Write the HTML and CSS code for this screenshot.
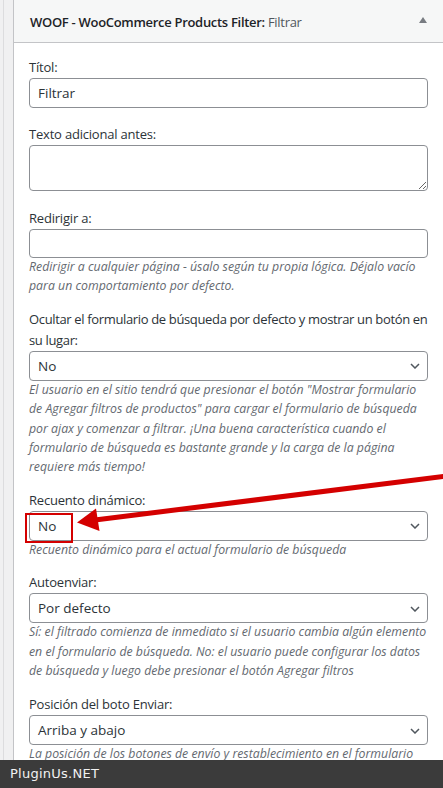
FILE: index.html
```html
<!DOCTYPE html>
<html lang="es">
<head>
<meta charset="utf-8">
<title>WOOF widget</title>
<link rel="stylesheet" href="styles.css">
</head>
<body>
<div class="frame">
  <div class="widget">
    <div class="widget-head">
      <h3 class="widget-title">WOOF - WooCommerce Products Filter: <span class="instance">Filtrar</span></h3>
      <svg class="toggle" width="8" height="6" viewBox="0 0 8 6"><polygon points="4,0 8,6 0,6" fill="#787c82"/></svg>
    </div>
    <div class="widget-body">
      <div class="field f1">
        <label class="label">Títol:</label>
        <input class="text" type="text" value="Filtrar">
      </div>
      <div class="field f2">
        <label class="label">Texto adicional antes:</label>
        <textarea class="area"></textarea>
      </div>
      <div class="field">
        <label class="label">Redirigir a:</label>
        <input class="text short" type="text" value="">
        <p class="desc">Redirigir a cualquier página - úsalo según tu propia lógica. Déjalo vacío para un comportamiento por defecto.</p>
      </div>
      <div class="field">
        <label class="label tight">Ocultar el formulario de búsqueda por defecto y mostrar un botón en su lugar:</label>
        <div class="select"><span>No</span><svg class="chev" width="10" height="6" viewBox="0 0 10 6"><path d="M1 1 L5 5 L9 1" fill="none" stroke="#50575e" stroke-width="1.5"/></svg></div>
        <p class="desc">El usuario en el sitio tendrá que presionar el botón "Mostrar formulario de Agregar filtros de productos" para cargar el formulario de búsqueda por ajax y comenzar a filtrar. ¡Una buena característica cuando el formulario de búsqueda es bastante grande y la carga de la página requiere más tiempo!</p>
      </div>
      <div class="field">
        <label class="label">Recuento dinámico:</label>
        <div class="select"><span>No</span><svg class="chev" width="10" height="6" viewBox="0 0 10 6"><path d="M1 1 L5 5 L9 1" fill="none" stroke="#50575e" stroke-width="1.5"/></svg></div>
        <p class="desc">Recuento dinámico para el actual formulario de búsqueda</p>
      </div>
      <div class="field">
        <label class="label">Autoenviar:</label>
        <div class="select"><span>Por defecto</span><svg class="chev" width="10" height="6" viewBox="0 0 10 6"><path d="M1 1 L5 5 L9 1" fill="none" stroke="#50575e" stroke-width="1.5"/></svg></div>
        <p class="desc">Sí: el filtrado comienza de inmediato si el usuario cambia algún elemento en el formulario de búsqueda. No: el usuario puede configurar los datos de búsqueda y luego debe presionar el botón Agregar filtros</p>
      </div>
      <div class="field f7">
        <label class="label">Posición del boto Enviar:</label>
        <div class="select"><span>Arriba y abajo</span><svg class="chev" width="10" height="6" viewBox="0 0 10 6"><path d="M1 1 L5 5 L9 1" fill="none" stroke="#50575e" stroke-width="1.5"/></svg></div>
        <p class="desc narrow">La posición de los botones de envío y restablecimiento en el formulario de búsqueda</p>
      </div>
    </div>
  </div>
</div>

<svg class="annot" width="443" height="788" viewBox="0 0 443 788">
  <rect x="26" y="514" width="46" height="28" fill="none" stroke="#d40000" stroke-width="2"/>
  <line x1="447" y1="476" x2="95" y2="520" stroke="#d40000" stroke-width="5"/>
  <polygon points="77,522.5 96,508.5 99.5,531" fill="#d40000"/>
</svg>

<div class="brandbar">PluginUs.NET</div>
</body>
</html>
```
FILE: styles.css
```css
html, body {
  margin: 0;
  height: 100%;
  overflow: hidden;
}

body {
  background: #f0f0f1;
  font-family: "Open Sans", "Noto Sans", sans-serif;
  font-size: 13px;
  color: #3c434a;
}

.frame {
  margin-left: 3px;
  border-left: 1px solid #dcdcde;
  padding-left: 9px;
  min-height: 100%;
}

.widget {
  background: #fff;
  border: 1px solid #c3c4c7;
  border-top: 0;
  margin-right: -1px;
  min-height: 900px;
}

.widget-head {
  height: 43px;
  box-sizing: border-box;
  border-bottom: 1px solid #c3c4c7;
  background: #f6f7f7;
  display: flex;
  align-items: center;
  padding: 0 16px 0 16px;
}

.widget-title {
  margin: 0;
  font-size: 13px;
  font-weight: 600;
  letter-spacing: -0.3px;
  color: #1d2327;
  line-height: 20px;
  padding-top: 1px;
}

.widget-title .instance {
  font-weight: 400;
  color: #50575e;
}

.toggle {
  margin-left: auto;
  margin-top: -2px;
}

.widget-body {
  padding: 0 15px;
}

.field {
  display: flex;
  flex-direction: column;
  align-items: stretch;
  margin-top: 13px;
}

.field.f1 {
  margin-top: 14px;
}

.field.f2 {
  margin-top: 16px;
}

.field.f7 {
  margin-top: 14px;
}

.label {
  line-height: 21px;
  letter-spacing: -0.2px;
  color: #2c3338;
}

.label.tight {
  letter-spacing: -0.35px;
  margin-right: -4px;
}

.text {
  box-sizing: border-box;
  height: 30px;
  margin: 0;
  border: 1px solid #8c8f94;
  border-radius: 4px;
  padding: 0 8px;
  font-family: inherit;
  font-size: 13.5px;
  color: #2c3338;
  background: #fff;
  outline: none;
}

.text.short {
  height: 29px;
}

.area {
  box-sizing: border-box;
  height: 46px;
  margin: 0 0 4px;
  border: 1px solid #8c8f94;
  border-radius: 4px;
  padding: 2px 6px;
  font-family: inherit;
  font-size: 13px;
  background: #fff;
  outline: none;
}

.select {
  box-sizing: border-box;
  height: 30px;
  border: 1px solid #8c8f94;
  border-radius: 4px;
  padding: 0 7px 0 8px;
  display: flex;
  align-items: center;
  justify-content: space-between;
  font-size: 13.5px;
  color: #2c3338;
  background: #fff;
}

.chev {
  margin-top: 1px;
}

.desc {
  margin: -1px -3px 0 0;
  font-size: 12.3px;
  font-style: italic;
  line-height: 19.4px;
  color: #646970;
}

.desc.narrow {
  margin-right: 0;
}

.annot {
  position: absolute;
  left: 0;
  top: 0;
  pointer-events: none;
}

.brandbar {
  position: fixed;
  left: 0;
  right: 0;
  bottom: 0;
  height: 28px;
  background: #3b3b3b;
  color: #f2f2f2;
  font-family: "DejaVu Sans", sans-serif;
  font-size: 13px;
  letter-spacing: 0.25px;
  line-height: 28px;
  padding-left: 10px;
}
```
